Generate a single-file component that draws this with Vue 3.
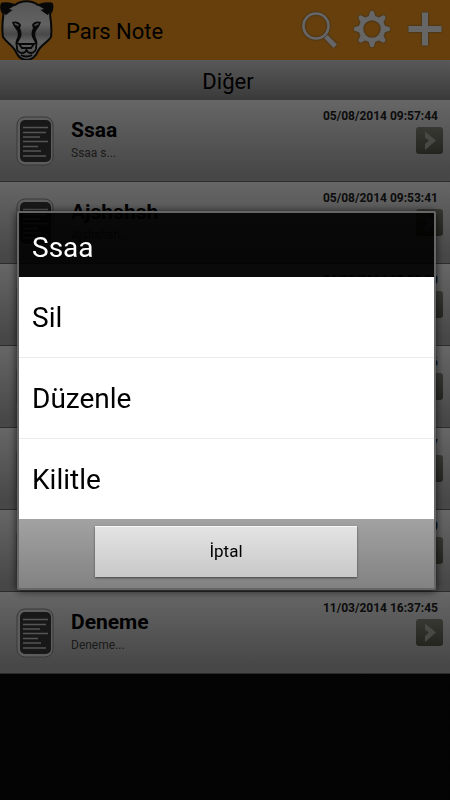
<script setup>
import { ref } from 'vue'

const notes = ref([
  { title: 'Ssaa', text: 'Ssaa s...', date: '05/08/2014 09:57:44' },
  { title: 'Ajshshsh', text: 'Ajshshsh...', date: '05/08/2014 09:53:41' },
  { title: '', text: '', date: '04/08/2014 07:30:30' },
  { title: '', text: '', date: '21/05/2014 12:10:26' },
  { title: '', text: '', date: '14/04/2014 18:22:17' },
  { title: '', text: '', date: '12/03/2014 10:05:30' },
  { title: 'Deneme', text: 'Deneme...', date: '11/03/2014 16:37:45' },
])
const actions = ['Sil', 'Düzenle', 'Kilitle']
const open = ref(true)
const teeth = [0, 45, 90, 135, 180, 225, 270, 315]
</script>

<template>
  <div class="screen">
    <header class="appbar">
      <svg class="logo" viewBox="0 0 54 60" aria-hidden="true">
        <defs>
          <linearGradient id="face" x1="0" y1="0" x2="0" y2="1">
            <stop offset="0" stop-color="#d8d8d8" />
            <stop offset=".4" stop-color="#f4f4f4" />
            <stop offset=".56" stop-color="#b4b4b4" />
            <stop offset=".68" stop-color="#f0f0f0" />
            <stop offset="1" stop-color="#c4c4c4" />
          </linearGradient>
        </defs>
        <path d="M2 4C6 2 11 4 15 5C21 0 32 0 38 5C42 4 48 2 52 4C53 7 52 11 50 14C51 21 52 30 51 37C48 42 41 45 38 51C36 57 31 60 26.500 60C22 60 18 57 15.500 51C12 45 6 42 3 37C2 31 2.500 21 3.500 14C1.500 11 .5 7 2 4Z" fill="url(#face)" stroke="#161616" stroke-width="2" />
        <path d="M1 3C4 2 10 4 15 5.500L9 9L12.500 10L6 15C2 12 0 7 1 3ZM52.500 3C49 2 43 4 38 5.500L44 9L40.500 10L47.500 15C51.500 12 53.500 7 52.500 3Z" fill="#161616" />
        <path d="M12 22C16 20.500 20 22 21 25L20 28C22 32 22 36 20 39C18 42 17 45 17.500 49C14 44 16 40 17.500 37C18.500 33 17 30 15 28C13.500 26 12.500 24 12 22ZM41 22C37 20.500 33 22 32 25L33 28C31 32 31 36 33 39C35 42 36 45 35.500 49C39 44 37 40 35.500 37C34.500 33 36 30 38 28C39.500 26 40.500 24 41 22Z" fill="#161616" />
        <path d="M14.500 23.500L18.500 25.500M38.500 23.500L34.500 25.500" stroke="#c8c8c8" stroke-width="1.600" />
        <path d="M19 44H34L31 48H22ZM26.500 48V50M17 46C16 50 19 53 22 53C25 53 26 51.500 26.500 50C27 51.500 28 53 31 53C34 53 37 50 36 46M21 55C24 57 29 57 32 55" fill="none" stroke="#161616" stroke-width="1.800" />
      </svg>
      <h1>Pars Note</h1>
      <nav class="tools">
        <button type="button" aria-label="Ara">
          <svg viewBox="0 0 40 40">
            <circle cx="17" cy="16" r="12.500" fill="none" stroke="#fff" stroke-width="2.600" />
            <path d="M25 28L28.500 25L38 34.500L34.500 38Z" fill="#fff" />
          </svg>
        </button>
        <button type="button" aria-label="Ayarlar">
          <svg viewBox="0 0 40 40">
            <circle cx="20" cy="19" r="11" fill="none" stroke="#fff" stroke-width="4.500" />
            <path v-for="a in teeth" :key="a" d="M16 8L18.200 1.500Q20 0 21.800 1.500L24 8Z" fill="#fff" :transform="`rotate(${a} 20 19)`" />
          </svg>
        </button>
        <button type="button" aria-label="Yeni not">
          <svg viewBox="0 0 40 40"><path d="M17 2.500H23V16H36.500V22H23V35.500H17V22H3.500V16H17Z" fill="#fff" /></svg>
        </button>
      </nav>
    </header>

    <h2 class="category">Diğer</h2>

    <ul class="notes">
      <li v-for="note in notes" :key="note.date" class="note">
        <svg class="sheet" viewBox="0 0 38 50" aria-hidden="true">
          <rect x="1" y="1" width="36" height="48" rx="8" fill="#e6e6e6" stroke="#8c8c8c" />
          <rect x="4" y="4" width="31" height="42" rx="5" fill="#3c3c3c" />
          <path d="M7 11.500h25M7 16.500h23M7 21h17M7 25.500h25M7 30.500h15M7 35h18M7 40h23" stroke="#d2d2d2" stroke-width="1.600" />
        </svg>
        <div class="body">
          <h3 v-if="note.title">{{ note.title }}</h3>
          <p v-if="note.text">{{ note.text }}</p>
        </div>
        <div class="side">
          <time>{{ note.date }}</time>
          <button type="button" class="go" aria-label="Notu aç">
            <svg viewBox="0 0 27 27"><path d="M9 4.500L20 13.500L9 23V17L13 13.500L9 10.500Z" fill="#b4b4ac" /></svg>
          </button>
        </div>
      </li>
    </ul>

    <div v-if="open" class="scrim">
      <section class="dialog" role="dialog" aria-modal="true" aria-labelledby="dialog-title">
        <h2 id="dialog-title">Ssaa</h2>
        <div class="actions">
          <button v-for="action in actions" :key="action" type="button" @click="open = false">{{ action }}</button>
        </div>
        <footer>
          <button type="button" class="cancel" @click="open = false">İptal</button>
        </footer>
      </section>
    </div>
  </div>
</template>

<style>
body {
  margin: 0;
  background: #080808;
}
</style>

<style scoped>
.screen {
  min-height: 100vh;
  background: repeating-linear-gradient(68deg, #0c0c0b 0 2px, #080808 2px 5px);
  font-family: Roboto, "Noto Sans", sans-serif;
  color: #000;
}
h1, h2, h3, p, ul {
  margin: 0;
  padding: 0;
  font-weight: 400;
}
button {
  padding: 0;
  border: 0;
  background: none;
  font: inherit;
  color: inherit;
}
svg {
  display: block;
}
.appbar {
  display: flex;
  align-items: center;
  height: 60px;
  background: #ff9f1e;
}
.logo {
  width: 54px;
  height: 60px;
}
.appbar h1 {
  flex: 1;
  padding: 4px 0 0 12px;
  font-size: 22px;
  line-height: 28px;
}
.tools {
  display: flex;
  gap: 13px;
  padding-right: 5px;
}
.tools svg {
  width: 40px;
  height: 40px;
  filter: drop-shadow(0 0 1px #6b6b6b);
}
.category {
  height: 40px;
  padding-left: 6px;
  box-sizing: border-box;
  background: linear-gradient(#dedede, #919191);
  font-size: 22px;
  line-height: 44px;
  text-align: center;
}
.notes {
  list-style: none;
}
.note {
  display: flex;
  height: 82px;
  box-sizing: border-box;
  border-bottom: 1px solid #6e6e6e;
  padding: 0 7px 0 16px;
  background: linear-gradient(#fff, #b2b2b2 90%);
}
.sheet {
  width: 38px;
  height: 50px;
  margin-top: 16px;
}
.body {
  flex: 1;
  padding: 17px 0 0 17px;
}
.body h3 {
  font-size: 21px;
  line-height: 26px;
  font-weight: 700;
}
.body p {
  padding-top: 1px;
  font-size: 12px;
  line-height: 18px;
  color: #444;
}
.side {
  display: flex;
  flex-direction: column;
  align-items: flex-end;
  padding-top: 7px;
}
.side time {
  padding-right: 5px;
  font-size: 12px;
  line-height: 18px;
  font-weight: 700;
  color: #222;
}
.go {
  width: 27px;
  height: 27px;
  margin-top: 2px;
  border-radius: 3px;
  background: linear-gradient(#8c8c80, #5c5c50);
}
.scrim {
  position: fixed;
  inset: 0;
  display: flex;
  align-items: center;
  padding: 0 14px 0 17px;
  background: rgba(0, 0, 0, 0.6);
}
.dialog {
  flex: 1;
  border: 2px solid #666;
  border-radius: 2px;
  background-clip: padding-box;
  box-shadow: 0 1px 8px rgba(0, 0, 0, 0.75);
}
.dialog h2 {
  padding: 6px 13px 0;
  background: rgba(0, 0, 0, 0.9);
  color: #fff;
  font-size: 28px;
  line-height: 58px;
}
.actions {
  display: flex;
  flex-direction: column;
  background: #fff;
}
.actions button {
  padding: 2px 13px 0;
  font-size: 28px;
  line-height: 78px;
  text-align: left;
}
.actions button + button {
  border-top: 1px solid #ebebeb;
}
.dialog footer {
  display: flex;
  justify-content: center;
  padding: 7px 77px 11px 76px;
  background: linear-gradient(#a2a2a2, #828282);
}
.cancel {
  flex: 1;
  height: 51px;
  background: linear-gradient(#e4e4e4, #c8c8c8);
  box-shadow: inset 0 1px #f6f6f6, 0 1px 2px #444;
  font-size: 17px;
  line-height: 51px;
}
</style>
